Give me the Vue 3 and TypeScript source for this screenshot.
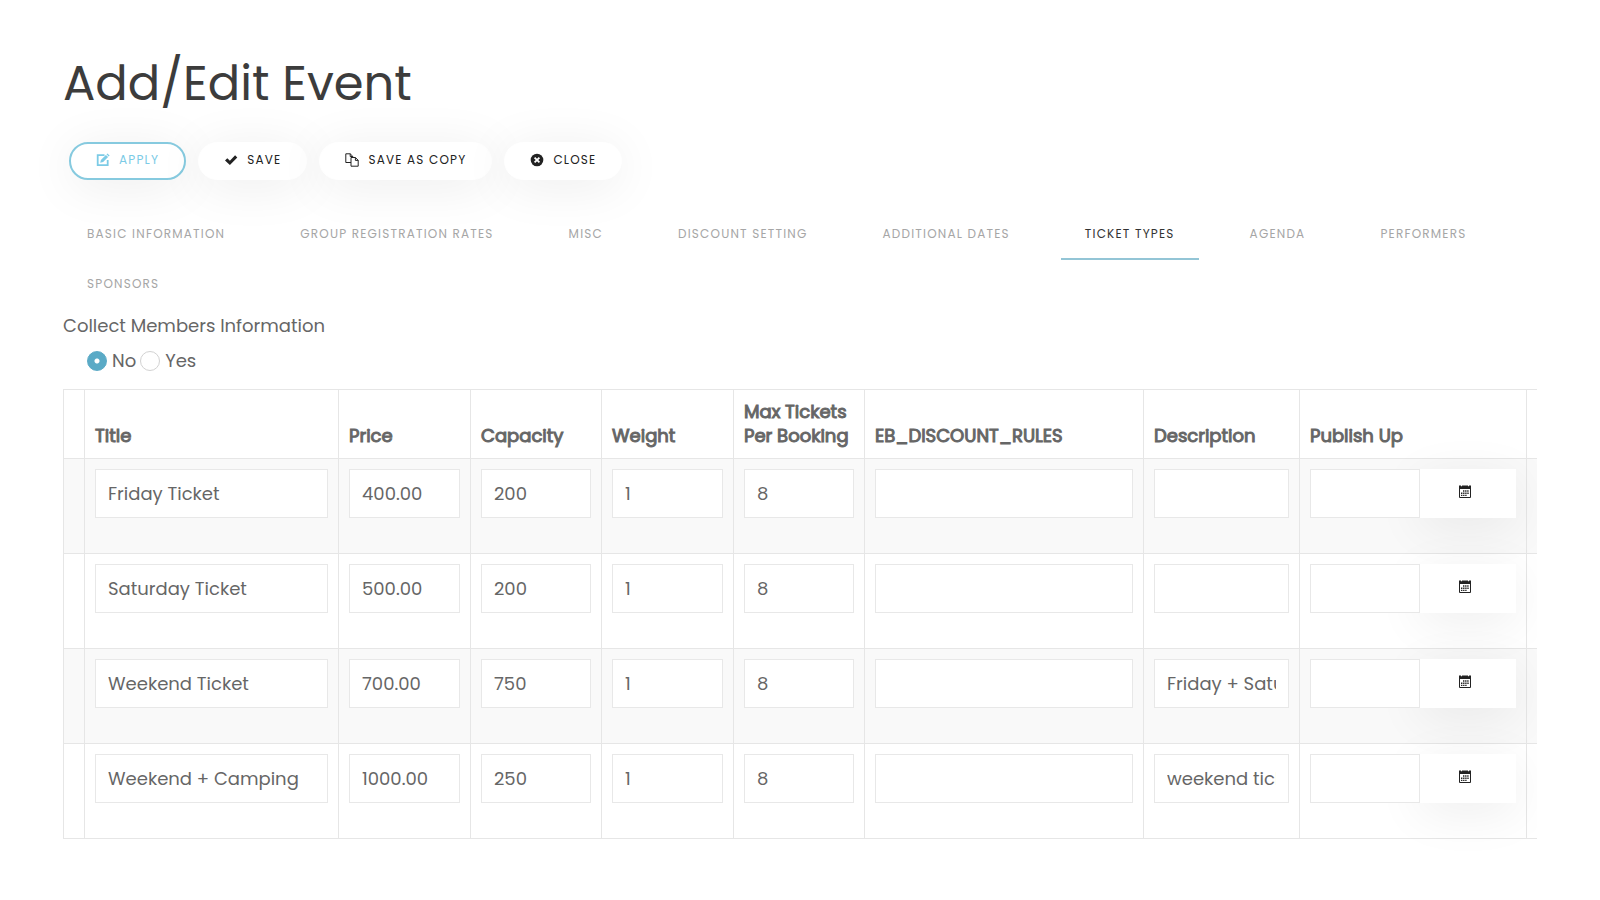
<script setup lang="ts">
import { ref } from 'vue'

interface Ticket {
  title: string
  price: string
  capacity: string
  weight: string
  max: string
  rules: string
  description: string
  publishUp: string
}

type Field = Exclude<keyof Ticket, 'publishUp'>

const tabs: string[] = [
  'Basic Information',
  'Group Registration Rates',
  'Misc',
  'Discount Setting',
  'Additional Dates',
  'Ticket Types',
  'Agenda',
  'Performers',
  'Sponsors',
]
const activeTab = ref('Ticket Types')
const collect = ref('no')

const columns: { key: Field; label: string }[] = [
  { key: 'title', label: 'Title' },
  { key: 'price', label: 'Price' },
  { key: 'capacity', label: 'Capacity' },
  { key: 'weight', label: 'Weight' },
  { key: 'max', label: 'Max Tickets Per Booking' },
  { key: 'rules', label: 'EB_DISCOUNT_RULES' },
  { key: 'description', label: 'Description' },
]

const tickets = ref<Ticket[]>([
  { title: 'Friday Ticket', price: '400.00', capacity: '200', weight: '1', max: '8', rules: '', description: '', publishUp: '' },
  { title: 'Saturday Ticket', price: '500.00', capacity: '200', weight: '1', max: '8', rules: '', description: '', publishUp: '' },
  { title: 'Weekend Ticket', price: '700.00', capacity: '750', weight: '1', max: '8', rules: '', description: 'Friday + Saturday', publishUp: '' },
  { title: 'Weekend + Camping', price: '1000.00', capacity: '250', weight: '1', max: '8', rules: '', description: 'weekend ticket', publishUp: '' },
])
</script>

<template>
  <main class="page">
    <h1>Add/Edit Event</h1>

    <div class="toolbar">
      <button type="button" class="btn primary">
        <svg viewBox="0 0 14 14" aria-hidden="true">
          <path d="M8.5 2.2H1.7v10h10V7" fill="none" stroke="currentColor" stroke-width="1.8" />
          <path d="M4.2 9.8l.7-2.9 5-5 2.2 2.2-5 5zM10.5 1.3l.9-.9 2.2 2.2-.9.9z" fill="currentColor" />
        </svg>
        Apply
      </button>
      <button type="button" class="btn">
        <svg viewBox="0 0 14 14" aria-hidden="true">
          <path d="M1 7.4l2.3-2.2 2.6 2.5 5.2-5.5 2.2 2.2-7.4 7.7z" fill="currentColor" />
        </svg>
        Save
      </button>
      <button type="button" class="btn">
        <svg viewBox="0 0 14 14" aria-hidden="true">
          <path d="M6 9.5H.8V.8h4.4l2.6 2.6v1M5.2.8v2.7h2.6M6 4.5h4.4l2.8 2.8v5.9H6zM10.4 4.5v2.9h2.8" fill="none" stroke="currentColor" stroke-width="1" />
        </svg>
        Save as Copy
      </button>
      <button type="button" class="btn">
        <svg viewBox="0 0 14 14" aria-hidden="true">
          <circle cx="7" cy="7" r="6.3" fill="currentColor" />
          <path d="M4.6 4.6l4.8 4.8M9.4 4.6L4.6 9.4" stroke="#fff" stroke-width="1.8" />
        </svg>
        Close
      </button>
    </div>

    <nav class="tabs">
      <a
        v-for="tab in tabs"
        :key="tab"
        href="#"
        :class="{ active: tab === activeTab }"
        @click.prevent="activeTab = tab"
      >{{ tab }}</a>
    </nav>

    <fieldset class="collect">
      <legend>Collect Members Information</legend>
      <div class="options">
        <label><input v-model="collect" type="radio" name="collect" value="no">No</label>
        <label><input v-model="collect" type="radio" name="collect" value="yes">Yes</label>
      </div>
    </fieldset>

    <div class="table-wrap">
      <table>
        <colgroup>
          <col class="w-handle">
          <col class="w-title">
          <col class="w-num">
          <col class="w-count">
          <col class="w-num">
          <col class="w-count">
          <col class="w-rules">
          <col class="w-desc">
          <col class="w-date">
          <col class="w-rest">
        </colgroup>
        <thead>
          <tr>
            <th></th>
            <th v-for="c in columns" :key="c.key" scope="col">{{ c.label }}</th>
            <th scope="col">Publish Up</th>
            <th></th>
          </tr>
        </thead>
        <tbody>
          <tr v-for="(t, i) in tickets" :key="i">
            <td></td>
            <td v-for="c in columns" :key="c.key">
              <input v-model="t[c.key]" type="text" class="field" :aria-label="c.label">
            </td>
            <td>
              <div class="date">
                <input v-model="t.publishUp" type="text" class="field" aria-label="Publish Up">
                <button type="button" class="picker" aria-label="Open calendar">
                  <svg viewBox="0 0 12 13" aria-hidden="true">
                    <path d="M0 .5h2v.7h1V.5h6v.7h1V.5h2V4H0z" fill="currentColor" />
                    <path d="M.5 4v8.5h11V4" fill="none" stroke="currentColor" />
                    <path d="M4 6h6M2 8.2h8M2 10.4h6" fill="none" stroke="currentColor" stroke-width="1.4" stroke-dasharray="1.4 .7" />
                  </svg>
                </button>
              </div>
            </td>
            <td></td>
          </tr>
        </tbody>
      </table>
    </div>
  </main>
</template>

<style>
body {
  margin: 0;
  background: #fff;
}
</style>

<style scoped>
.page {
  padding: 48px 63px;
  color: #666;
  font-family: Poppins, Inter, "Liberation Sans", sans-serif;
  font-size: 18px;
  line-height: 24px;
}

h1 {
  margin: 0;
  color: #3c3c3c;
  font-size: 48px;
  font-weight: 400;
  line-height: 72px;
}

.toolbar {
  display: flex;
  flex-wrap: wrap;
  gap: 12px;
  padding: 22px 6px 0;
}

.btn {
  display: flex;
  align-items: center;
  gap: 9px;
  height: 38px;
  padding: 0 25px 2px;
  border: 1px solid #fff;
  border-radius: 19px;
  background: #fff;
  box-shadow: 0 6px 50px rgba(0, 0, 0, 0.08);
  color: #222;
  font-family: inherit;
  font-size: 12px;
  letter-spacing: 0.1em;
  line-height: 20px;
  text-transform: uppercase;
}

.btn svg {
  width: 14px;
  height: 14px;
}

.btn.primary {
  border: 2px solid #86cadf;
  padding: 0 25px 2px;
  color: #7ccbe6;
}

.tabs {
  display: flex;
  flex-wrap: wrap;
  column-gap: 27px;
  row-gap: 0;
  margin-top: 30px;
}

.tabs a {
  padding: 14px 24px;
  border-bottom: 2px solid transparent;
  color: #a6a6a6;
  font-size: 12px;
  letter-spacing: 0.1em;
  line-height: 20px;
  text-decoration: none;
  text-transform: uppercase;
}

.tabs a.active {
  border-color: #93c5d6;
  color: #333;
}

.collect {
  margin: 0;
  padding: 0;
  border: 0;
}

.collect legend {
  padding: 4px 0 11px;
}

.options {
  display: flex;
  gap: 4px;
  padding-left: 24px;
}

.options label {
  display: flex;
  align-items: center;
  gap: 5px;
}

.options input {
  appearance: none;
  width: 20px;
  height: 20px;
  margin: 0;
  border: 1px solid #d2d2d2;
  border-radius: 50%;
  background: #fff;
}

.options input:checked {
  border-color: #5aaac6;
  background: radial-gradient(circle, #fff 2px, #5aaac6 3px);
}

.table-wrap {
  margin-top: 16px;
  overflow-x: clip;
}

table {
  width: 1702px;
  border-collapse: collapse;
  table-layout: fixed;
}

.w-handle { width: 21px; }
.w-title { width: 254px; }
.w-num { width: 132px; }
.w-count { width: 131px; }
.w-rules { width: 279px; }
.w-desc { width: 156px; }
.w-date { width: 227px; }
.w-rest { width: 239px; }

th,
td {
  padding: 10px;
  border: 1px solid #e6e6e6;
  text-align: left;
}

th {
  font-weight: 400;
  vertical-align: bottom;
  -webkit-text-stroke: 1px currentColor;
}

td {
  vertical-align: top;
}

tbody tr:nth-child(odd) {
  background: #f9f9f9;
}

.field {
  display: block;
  box-sizing: border-box;
  width: 100%;
  height: 49px;
  margin: 0 0 25px;
  padding: 0 12px;
  border: 1px solid #e8e8e8;
  border-radius: 0;
  background: #fff;
  color: #666;
  font: inherit;
}

.date {
  display: flex;
}

.date .field {
  position: relative;
  z-index: 1;
  flex: 1;
  min-width: 0;
}

.picker {
  display: flex;
  flex: none;
  align-items: center;
  justify-content: center;
  width: 96px;
  height: 49px;
  padding: 0 6px 4px 0;
  border: 0;
  background: #fff;
  box-shadow: 0 10px 50px rgba(0, 0, 0, 0.07);
  color: #222;
}

.picker svg {
  width: 12px;
  height: 13px;
}
</style>
